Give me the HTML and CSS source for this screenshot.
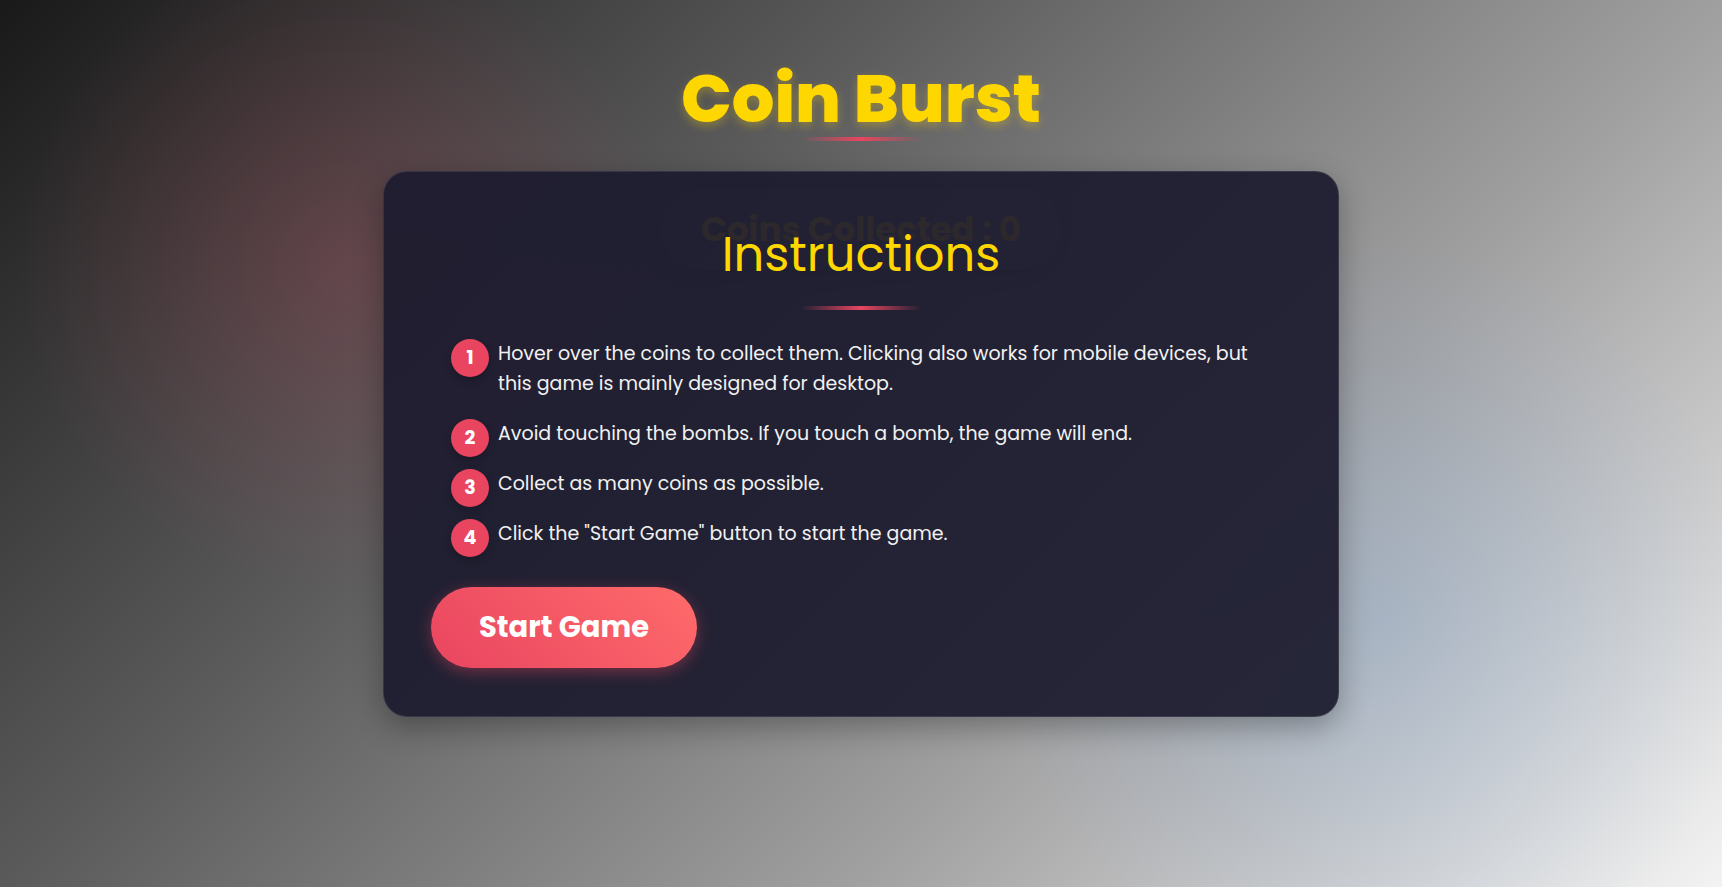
FILE: index.html
```
<!DOCTYPE html>
<html lang="en">
<head>
  <meta charset="UTF-8">
  <title>Coin Burst</title>
  <meta name="viewport" content="width=device-width, initial-scale=1.0">
  <link rel="stylesheet" href="styles.css">
</head>
<body>
  <h1 class="title">Coin Burst</h1>

  <main class="game">
    <div class="score">Coins Collected : <span id="score">0</span></div>

    <section class="instructions" id="instructions">
      <h2>Instructions</h2>
      <ol>
        <li>Hover over the coins to collect them. Clicking also works for mobile devices, but this game is mainly designed for desktop.</li>
        <li>Avoid touching the bombs. If you touch a bomb, the game will end.</li>
        <li>Collect as many coins as possible.</li>
        <li>Click the "Start Game" button to start the game.</li>
      </ol>
      <button type="button" class="start-btn">Start Game</button>
    </section>
  </main>
</body>
</html>
```
FILE: styles.css
```
* { margin: 0; padding: 0; box-sizing: border-box; }

body {
  min-height: 100vh;
  padding: 56px 20px 40px;
  font-family: Poppins, Inter, sans-serif;
  color: #f1f1f1;
  background:
    radial-gradient(circle at 20% 30%, rgba(233, 69, 96, 0.18) 0%, transparent 22%),
    radial-gradient(circle at 80% 70%, rgba(110, 160, 220, 0.24) 0%, transparent 25%),
    linear-gradient(135deg, #191919 0%, #5a5a5b 34%, #9f9fa0 66%, #f3f3f3 100%);
}

.title {
  position: relative;
  margin-bottom: 30px;
  line-height: 85px;
  font-size: 67px;
  font-weight: 800;
  text-align: center;
  color: #ffd700;
  text-shadow: 0 4px 10px rgba(255, 215, 0, 0.3);
}

/* fading line under a heading */
.title::after, .instructions h2::after {
  content: "";
  position: absolute;
  left: 50%;
  bottom: 0;
  width: 120px;
  height: 4px;
  transform: translateX(-50%);
  background: linear-gradient(90deg, transparent, #e94560, transparent);
}

/* the instructions card lies on top of the score */
.game { display: grid; justify-items: center; align-items: start; }
.score, .instructions { grid-area: 1 / 1; }

.score {
  margin-top: 17px;
  padding: 16px 40px;
  line-height: 50px;
  font-size: 34px;
  font-weight: 700;
  color: #ffd700;
  background: rgba(255, 255, 255, 0.07);
  border-radius: 50px;
  box-shadow: 0 8px 20px rgba(0, 0, 0, 0.2);
}

.instructions {
  z-index: 1;
  width: 100%;
  max-width: 956px;
  padding: 47px 47px 48px;
  background: rgba(28, 27, 46, 0.93);
  border: 1px solid rgba(255, 255, 255, 0.1);
  border-radius: 24px;
  box-shadow: 0 10px 30px rgba(0, 0, 0, 0.3);
}

.instructions h2 {
  position: relative;
  margin-bottom: 29px;
  padding-bottom: 19px;
  line-height: 72px;
  font-size: 48px;
  font-weight: 400;
  text-align: center;
  color: #ffd700;
}

.instructions ol {
  list-style: none;
  counter-reset: step;
  padding: 0 20px;
}

.instructions li {
  position: relative;
  margin-bottom: 20px;
  padding-left: 47px;
  line-height: 30px;
  font-size: 19px;
  counter-increment: step;
}

.instructions li::before {
  content: counter(step);
  position: absolute;
  left: 0;
  top: 0;
  width: 38px;
  height: 38px;
  line-height: 38px;
  border-radius: 50%;
  font-weight: 700;
  text-align: center;
  color: #fff;
  background: #e94560;
  box-shadow: 0 4px 8px rgba(0, 0, 0, 0.2);
}

.start-btn {
  margin-top: 18px;
  padding: 18px 48px;
  line-height: 45px;
  border: none;
  border-radius: 50px;
  font-family: inherit;
  font-size: 29px;
  font-weight: 700;
  color: #fff;
  background: linear-gradient(45deg, #e94560, #ff6b6b);
  box-shadow: 0 4px 15px rgba(233, 69, 96, 0.4);
  cursor: pointer;
}
```
